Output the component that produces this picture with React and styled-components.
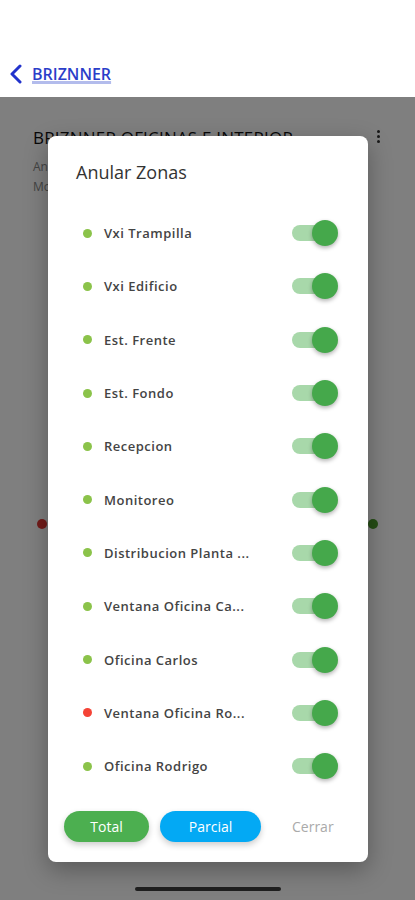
import styled, { createGlobalStyle } from "styled-components";

const Global = createGlobalStyle`
  body {
    margin: 0;
    font-family: "Open Sans", "Noto Sans", sans-serif;
    background: #ffffff;
  }
`;

const Screen = styled.div`
  width: 415px;
  height: 900px;
  display: flex;
  flex-direction: column;
  overflow: hidden;
  position: relative;
`;

const Header = styled.div`
  height: 97px;
  flex-shrink: 0;
  display: flex;
  align-items: flex-end;
  padding: 0 0 12px 9px;
  box-sizing: border-box;
  background: #fff;
`;

const BackLink = styled.a`
  display: flex;
  align-items: center;
  gap: 9px;
  color: #2b3ec9;
  font-size: 16px;
  font-weight: 600;
  text-decoration: underline;
  text-decoration-color: #b3bcec;
  text-decoration-thickness: 3px;
  text-underline-offset: 1px;
  cursor: pointer;
`;

const Body = styled.div`
  flex: 1;
  position: relative;
  background: #fff;
`;

const Page = styled.div`
  padding: 29px 33px 0;
  display: flex;
  flex-direction: column;
`;

const SiteRow = styled.div`
  display: flex;
  justify-content: space-between;
  align-items: flex-start;
`;

const SiteTitle = styled.div`
  font-size: 17px;
  color: #111;
  letter-spacing: 0.2px;
`;

const Kebab = styled.div`
  display: flex;
  flex-direction: column;
  gap: 2px;
  margin-right: 2px;
  padding-top: 4px;
  span {
    width: 3px;
    height: 3px;
    border-radius: 50%;
    background: #333;
  }
`;

const SiteMeta = styled.div`
  font-size: 12px;
  color: #888;
  line-height: 20px;
  margin-top: 8px;
`;

const StatusLine = styled.div`
  display: flex;
  justify-content: space-between;
  margin: 322px 4px 0 4px;
`;

const Dot = styled.span`
  width: ${(p) => p.size || 9}px;
  height: ${(p) => p.size || 9}px;
  border-radius: 50%;
  flex-shrink: 0;
  background: ${(p) => p.color};
`;

const Overlay = styled.div`
  position: absolute;
  inset: 0;
  background: rgba(0, 0, 0, 0.5);
  display: flex;
  align-items: center;
  justify-content: center;
`;

const Dialog = styled.div`
  width: 320px;
  height: 726px;
  margin-left: 1px;
  background: #fff;
  border-radius: 8px;
  box-shadow: 0 8px 24px rgba(0, 0, 0, 0.3);
  display: flex;
  flex-direction: column;
  box-sizing: border-box;
  padding-top: 24px;
`;

const Title = styled.h2`
  margin: 0 0 23px 28px;
  font-size: 18px;
  line-height: 24px;
  font-weight: 400;
  color: #333;
`;

const List = styled.div`
  display: flex;
  flex-direction: column;
`;

const Row = styled.div`
  height: 53.3px;
  display: flex;
  align-items: center;
  padding: 0 30px 0 35px;
`;

const Name = styled.span`
  flex: 1;
  margin-left: 12px;
  font-size: 13px;
  font-weight: 600;
  letter-spacing: 0.5px;
  color: #444;
  white-space: nowrap;
`;

const Switch = styled.div`
  width: 46px;
  height: 26px;
  position: relative;
  display: flex;
  align-items: center;
`;

const Track = styled.div`
  width: 38px;
  height: 16px;
  border-radius: 8px;
  background: #a8d8aa;
`;

const Knob = styled.div`
  position: absolute;
  right: 0;
  top: 0;
  width: 26px;
  height: 26px;
  border-radius: 50%;
  background: #45a84b;
  box-shadow: 0 2px 4px rgba(0, 0, 0, 0.3);
`;

const Actions = styled.div`
  display: flex;
  align-items: center;
  gap: 11px;
  margin-top: 18px;
  padding-left: 16px;
`;

const Pill = styled.button`
  height: 31px;
  width: ${(p) => p.width}px;
  border: none;
  border-radius: 16px;
  background: ${(p) => p.bg};
  color: #fff;
  font-family: inherit;
  font-size: 14px;
  box-shadow: 0 3px 6px rgba(0, 0, 0, 0.2);
`;

const TextButton = styled.button`
  border: none;
  background: none;
  font-family: inherit;
  font-size: 14px;
  color: #aaa;
  margin-left: 14px;
`;

const HomeBar = styled.div`
  position: absolute;
  bottom: 9px;
  left: 135px;
  width: 146px;
  height: 4px;
  border-radius: 2px;
  background: #1e1e1e;
`;

const zones = [
  { name: "Vxi Trampilla", ok: true },
  { name: "Vxi Edificio", ok: true },
  { name: "Est. Frente", ok: true },
  { name: "Est. Fondo", ok: true },
  { name: "Recepcion", ok: true },
  { name: "Monitoreo", ok: true },
  { name: "Distribucion Planta ...", ok: true },
  { name: "Ventana Oficina Ca...", ok: true },
  { name: "Oficina Carlos", ok: true },
  { name: "Ventana Oficina Ro...", ok: false },
  { name: "Oficina Rodrigo", ok: true },
];

export default function App() {
  return (
    <Screen>
      <Global />
      <Header>
        <BackLink>
          <svg width="14" height="20" viewBox="0 0 14 20">
            <path
              d="M11 2 L3 10 L11 18"
              fill="none"
              stroke="#2233cc"
              strokeWidth="3"
              strokeLinecap="round"
              strokeLinejoin="round"
            />
          </svg>
          BRIZNNER
        </BackLink>
      </Header>
      <Body>
        <Page>
          <SiteRow>
            <SiteTitle>BRIZNNER OFICINAS E INTERIOR</SiteTitle>
            <Kebab>
              <span />
              <span />
              <span />
            </Kebab>
          </SiteRow>
          <SiteMeta>
            Anular
            <br />
            Monitoreo
          </SiteMeta>
          <StatusLine>
            <Dot color="#e53935" size={10} />
            <Dot color="#4a9a2a" size={10} />
          </StatusLine>
        </Page>
        <Overlay>
          <Dialog>
            <Title>Anular Zonas</Title>
            <List>
              {zones.map((z) => (
                <Row key={z.name}>
                  <Dot color={z.ok ? "#8bc34a" : "#f44336"} />
                  <Name>{z.name}</Name>
                  <Switch>
                    <Track />
                    <Knob />
                  </Switch>
                </Row>
              ))}
            </List>
            <Actions>
              <Pill bg="#4caf50" width={85}>
                Total
              </Pill>
              <Pill bg="#03a9f4" width={101}>
                Parcial
              </Pill>
              <TextButton>Cerrar</TextButton>
            </Actions>
          </Dialog>
        </Overlay>
      </Body>
      <HomeBar />
    </Screen>
  );
}
